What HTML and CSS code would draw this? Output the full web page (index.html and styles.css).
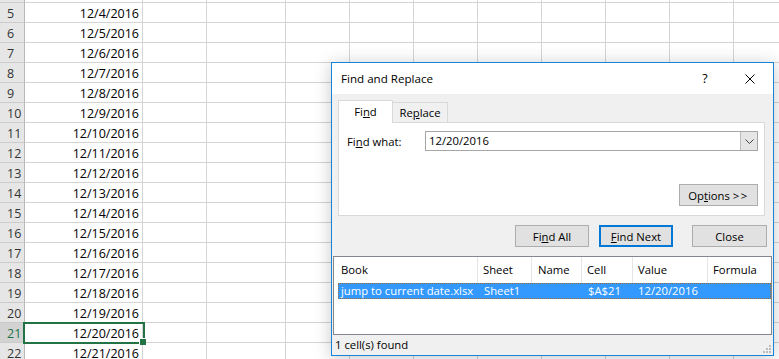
FILE: index.html
```html
<!DOCTYPE html>
<html lang="en">
<head>
    <meta charset="UTF-8">
    <title>Find and Replace</title>
    <link rel="stylesheet" href="styles.css">
</head>
<body>

    <div class="sheet">
        <div class="row"><div class="rh"></div><div class="cell col-a"></div><div class="cell col-b"></div><div class="cell col-c"></div><div class="cell rest"></div></div>
        <div class="row"><div class="rh">5</div><div class="cell col-a">12/4/2016</div><div class="cell col-b"></div><div class="cell col-c"></div><div class="cell rest"></div></div>
        <div class="row"><div class="rh">6</div><div class="cell col-a">12/5/2016</div><div class="cell col-b"></div><div class="cell col-c"></div><div class="cell rest"></div></div>
        <div class="row"><div class="rh">7</div><div class="cell col-a">12/6/2016</div><div class="cell col-b"></div><div class="cell col-c"></div><div class="cell rest"></div></div>
        <div class="row"><div class="rh">8</div><div class="cell col-a">12/7/2016</div><div class="cell col-b"></div><div class="cell col-c"></div><div class="cell rest"></div></div>
        <div class="row"><div class="rh">9</div><div class="cell col-a">12/8/2016</div><div class="cell col-b"></div><div class="cell col-c"></div><div class="cell rest"></div></div>
        <div class="row"><div class="rh">10</div><div class="cell col-a">12/9/2016</div><div class="cell col-b"></div><div class="cell col-c"></div><div class="cell rest"></div></div>
        <div class="row"><div class="rh">11</div><div class="cell col-a">12/10/2016</div><div class="cell col-b"></div><div class="cell col-c"></div><div class="cell rest"></div></div>
        <div class="row"><div class="rh">12</div><div class="cell col-a">12/11/2016</div><div class="cell col-b"></div><div class="cell col-c"></div><div class="cell rest"></div></div>
        <div class="row"><div class="rh">13</div><div class="cell col-a">12/12/2016</div><div class="cell col-b"></div><div class="cell col-c"></div><div class="cell rest"></div></div>
        <div class="row"><div class="rh">14</div><div class="cell col-a">12/13/2016</div><div class="cell col-b"></div><div class="cell col-c"></div><div class="cell rest"></div></div>
        <div class="row"><div class="rh">15</div><div class="cell col-a">12/14/2016</div><div class="cell col-b"></div><div class="cell col-c"></div><div class="cell rest"></div></div>
        <div class="row"><div class="rh">16</div><div class="cell col-a">12/15/2016</div><div class="cell col-b"></div><div class="cell col-c"></div><div class="cell rest"></div></div>
        <div class="row"><div class="rh">17</div><div class="cell col-a">12/16/2016</div><div class="cell col-b"></div><div class="cell col-c"></div><div class="cell rest"></div></div>
        <div class="row"><div class="rh">18</div><div class="cell col-a">12/17/2016</div><div class="cell col-b"></div><div class="cell col-c"></div><div class="cell rest"></div></div>
        <div class="row"><div class="rh">19</div><div class="cell col-a">12/18/2016</div><div class="cell col-b"></div><div class="cell col-c"></div><div class="cell rest"></div></div>
        <div class="row"><div class="rh">20</div><div class="cell col-a">12/19/2016</div><div class="cell col-b"></div><div class="cell col-c"></div><div class="cell rest"></div></div>
        <div class="row"><div class="rh rh-sel">21</div><div class="cell col-a cell-active">12/20/2016</div><div class="cell col-b"></div><div class="cell col-c"></div><div class="cell rest"></div></div>
        <div class="row"><div class="rh">22</div><div class="cell col-a">12/21/2016</div><div class="cell col-b"></div><div class="cell col-c"></div><div class="cell rest"></div></div>
    </div>

    <div class="dialog">
        <div class="titlebar">
            <span class="title">Find and Replace</span>
            <span class="help">?</span>
            <svg class="close-x" width="10" height="10" viewBox="0 0 10 10">
                <path d="M0.5 0.5 L9.5 9.5 M9.5 0.5 L0.5 9.5" stroke="#000" stroke-width="1" fill="none"/>
            </svg>
        </div>
        <div class="dialog-body">
            <div class="tabs">
                <div class="tab tab-current">Fi<u>n</u>d</div>
                <div class="tab">Re<u>p</u>lace</div>
            </div>
            <div class="panel">
                <div class="field">
                    <label class="field-label">Fi<u>n</u>d what:</label>
                    <div class="combo">
                        <span class="combo-text">12/20/2016</span>
                        <span class="combo-btn">
                            <svg width="9" height="5" viewBox="0 0 9 5">
                                <path d="M0.5 0.5 L4.5 4.5 L8.5 0.5" stroke="#444" stroke-width="1" fill="none"/>
                            </svg>
                        </span>
                    </div>
                </div>
                <div class="panel-foot">
                    <button class="btn btn-options">Op<u>t</u>ions <span class="gt">&gt;&gt;</span></button>
                </div>
            </div>
            <div class="actions">
                <button class="btn btn-find-all">Fi<u>n</u>d All</button>
                <button class="btn btn-default"><u>F</u>ind Next</button>
                <button class="btn btn-close">Close</button>
            </div>
            <div class="results">
                <div class="results-head">
                    <div class="hcol h-book">Book</div>
                    <div class="hcol h-sheet">Sheet</div>
                    <div class="hcol h-name">Name</div>
                    <div class="hcol h-cell">Cell</div>
                    <div class="hcol h-value">Value</div>
                    <div class="hcol h-formula">Formula</div>
                </div>
                <div class="result-row selected">
                    <div class="rcol r-book">jump to current date.xlsx</div>
                    <div class="rcol r-sheet">Sheet1</div>
                    <div class="rcol r-name"></div>
                    <div class="rcol r-cell">$A$21</div>
                    <div class="rcol r-value">12/20/2016</div>
                    <div class="rcol r-formula"></div>
                </div>
            </div>
            <div class="status">
                1 cell(s) found
                <svg class="grip" width="9" height="9" viewBox="0 0 9 9">
                    <rect x="6" y="0" width="2" height="2" fill="#bcbcbc"/>
                    <rect x="3" y="3" width="2" height="2" fill="#bcbcbc"/>
                    <rect x="6" y="3" width="2" height="2" fill="#bcbcbc"/>
                    <rect x="0" y="6" width="2" height="2" fill="#bcbcbc"/>
                    <rect x="3" y="6" width="2" height="2" fill="#bcbcbc"/>
                    <rect x="6" y="6" width="2" height="2" fill="#bcbcbc"/>
                </svg>
            </div>
        </div>
    </div>

</body>
</html>
```

FILE: styles.css
```css
* {
    box-sizing: border-box;
}
body {
    margin: 0;
    width: 779px;
    height: 359px;
    overflow: hidden;
    position: relative;
    background-color: #fff;
    font-family: "Open Sans", "Liberation Sans", sans-serif;
}

/* spreadsheet behind the dialog */
.sheet {
    margin-top: -17px;
    font-size: 12.5px;
}
.row {
    display: flex;
    height: 20px;
}
.rh, .cell {
    height: 20px;
    line-height: 22px;
    border-bottom: 1px solid #d4d4d4;
    border-right: 1px solid #d4d4d4;
    white-space: nowrap;
}
.rh {
    width: 25px;
    padding-left: 7px;
    background-color: #e6e6e6;
    border-bottom-color: #cbcbcb;
    border-right-color: #b8b8b8;
    color: #333;
}
.rh-sel {
    background-color: #d2d2d2;
    color: #217346;
}
.col-a {
    width: 118px;
    text-align: right;
    padding-right: 3px;
}
.col-b {
    width: 64px;
}
.col-c {
    width: 79px;
}
.rest {
    flex: 1;
    border-right: none;
    background: repeating-linear-gradient(to right, transparent 0 63px, #d4d4d4 63px 64px);
}
.cell-active {
    position: relative;
    z-index: 2;
}
.cell-active::after {
    content: "";
    position: absolute;
    left: -2px;
    top: -1px;
    right: -3px;
    bottom: -2px;
    border: 2px solid #217346;
}
.cell-active::before {
    content: "";
    position: absolute;
    right: -4px;
    bottom: -3px;
    width: 6px;
    height: 6px;
    background-color: #217346;
    box-shadow: -1px -1px 0 #fff;
    z-index: 1;
}

/* dialog */
.dialog {
    position: absolute;
    left: 331px;
    top: 62px;
    width: 443px;
    height: 294px;
    border: 1px solid #1883d7;
    background-color: #f0f0f0;
    box-shadow: 0 2px 16px rgba(0, 0, 0, 0.22);
    display: flex;
    flex-direction: column;
    font-size: 11.3px;
    color: #000;
}
.titlebar {
    height: 31px;
    background-color: #fff;
    display: flex;
    align-items: center;
    padding-left: 9px;
}
.title {
    flex: 1;
    font-size: 11.6px;
}
.help {
    width: 12px;
    text-align: center;
    font-size: 12.5px;
    margin-right: 34px;
}
.close-x {
    margin-right: 18px;
}
.dialog-body {
    flex: 1;
    display: flex;
    flex-direction: column;
    padding-top: 6px;
}
.tabs {
    display: flex;
    align-items: flex-end;
    height: 22px;
    margin-left: 6px;
    position: relative;
    z-index: 1;
}
.tab {
    width: 55px;
    height: 20px;
    line-height: 19px;
    text-align: center;
    border: 1px solid #d9d9d9;
    border-bottom: none;
}
.tab + .tab {
    border-left: none;
}
.tab-current {
    height: 23px;
    line-height: 22px;
    margin-bottom: -1px;
    background-color: #fff;
}
.panel {
    margin-left: 6px;
    width: 427px;
    height: 94px;
    background-color: #fff;
    border: 1px solid #d9d9d9;
    padding: 8px 6px 9px 8px;
    display: flex;
    flex-direction: column;
}
.field {
    display: flex;
    align-items: center;
    height: 20px;
}
.field-label {
    width: 78px;
}
.combo {
    width: 333px;
    height: 20px;
    border: 1px solid #a6a6a6;
    display: flex;
}
.combo-text {
    flex: 1;
    padding-left: 3px;
    line-height: 18px;
}
.combo-btn {
    width: 17px;
    background-color: #e5e5e5;
    border-left: 1px solid #bcbcbc;
    display: flex;
    align-items: center;
    justify-content: center;
}
.panel-foot {
    margin-top: auto;
    display: flex;
    justify-content: flex-end;
}
.btn {
    height: 22px;
    padding: 0;
    font: inherit;
    color: #000;
    background-color: #e1e1e1;
    border: 1px solid #adadad;
}
.btn-options {
    width: 79px;
}
.gt {
    letter-spacing: 1.5px;
}
.actions {
    display: flex;
    justify-content: flex-end;
    margin-top: 9px;
    padding-right: 6px;
}
.btn-find-all {
    width: 74px;
    margin-right: 10px;
}
.btn-default {
    width: 74px;
    margin-right: 19px;
    border: 2px solid #0078d7;
}
.btn-close {
    width: 75px;
}
.results {
    margin: 9px 1px 0;
    height: 79px;
    border: 1px solid #828790;
    background-color: #fff;
}
.results-head {
    display: flex;
    height: 26px;
    line-height: 26px;
}
.hcol {
    border-right: 1px solid #e5e5e5;
    padding-left: 5px;
}
.h-book {
    width: 144px;
    padding-left: 7px;
}
.h-sheet {
    width: 54px;
}
.h-name {
    width: 50px;
    padding-left: 6px;
}
.h-cell {
    width: 51px;
}
.h-value {
    width: 75px;
}
.h-formula {
    flex: 1;
    border-right: none;
}
.result-row {
    display: flex;
    height: 16px;
    line-height: 14px;
    margin-left: 4px;
}
.selected {
    background-color: #3399ff;
    color: #fff;
    border: 1px dotted #9c6a36;
}
.rcol {
    padding-left: 6px;
    white-space: nowrap;
}
.r-book {
    width: 139px;
    padding-left: 2px;
}
.r-sheet {
    width: 54px;
}
.r-name {
    width: 50px;
}
.r-cell {
    width: 51px;
}
.r-value {
    width: 75px;
    padding-left: 5px;
}
.r-formula {
    flex: 1;
}
.status {
    height: 20px;
    line-height: 20px;
    padding-left: 3px;
    position: relative;
}
.grip {
    position: absolute;
    right: 1px;
    bottom: 1px;
}
```
